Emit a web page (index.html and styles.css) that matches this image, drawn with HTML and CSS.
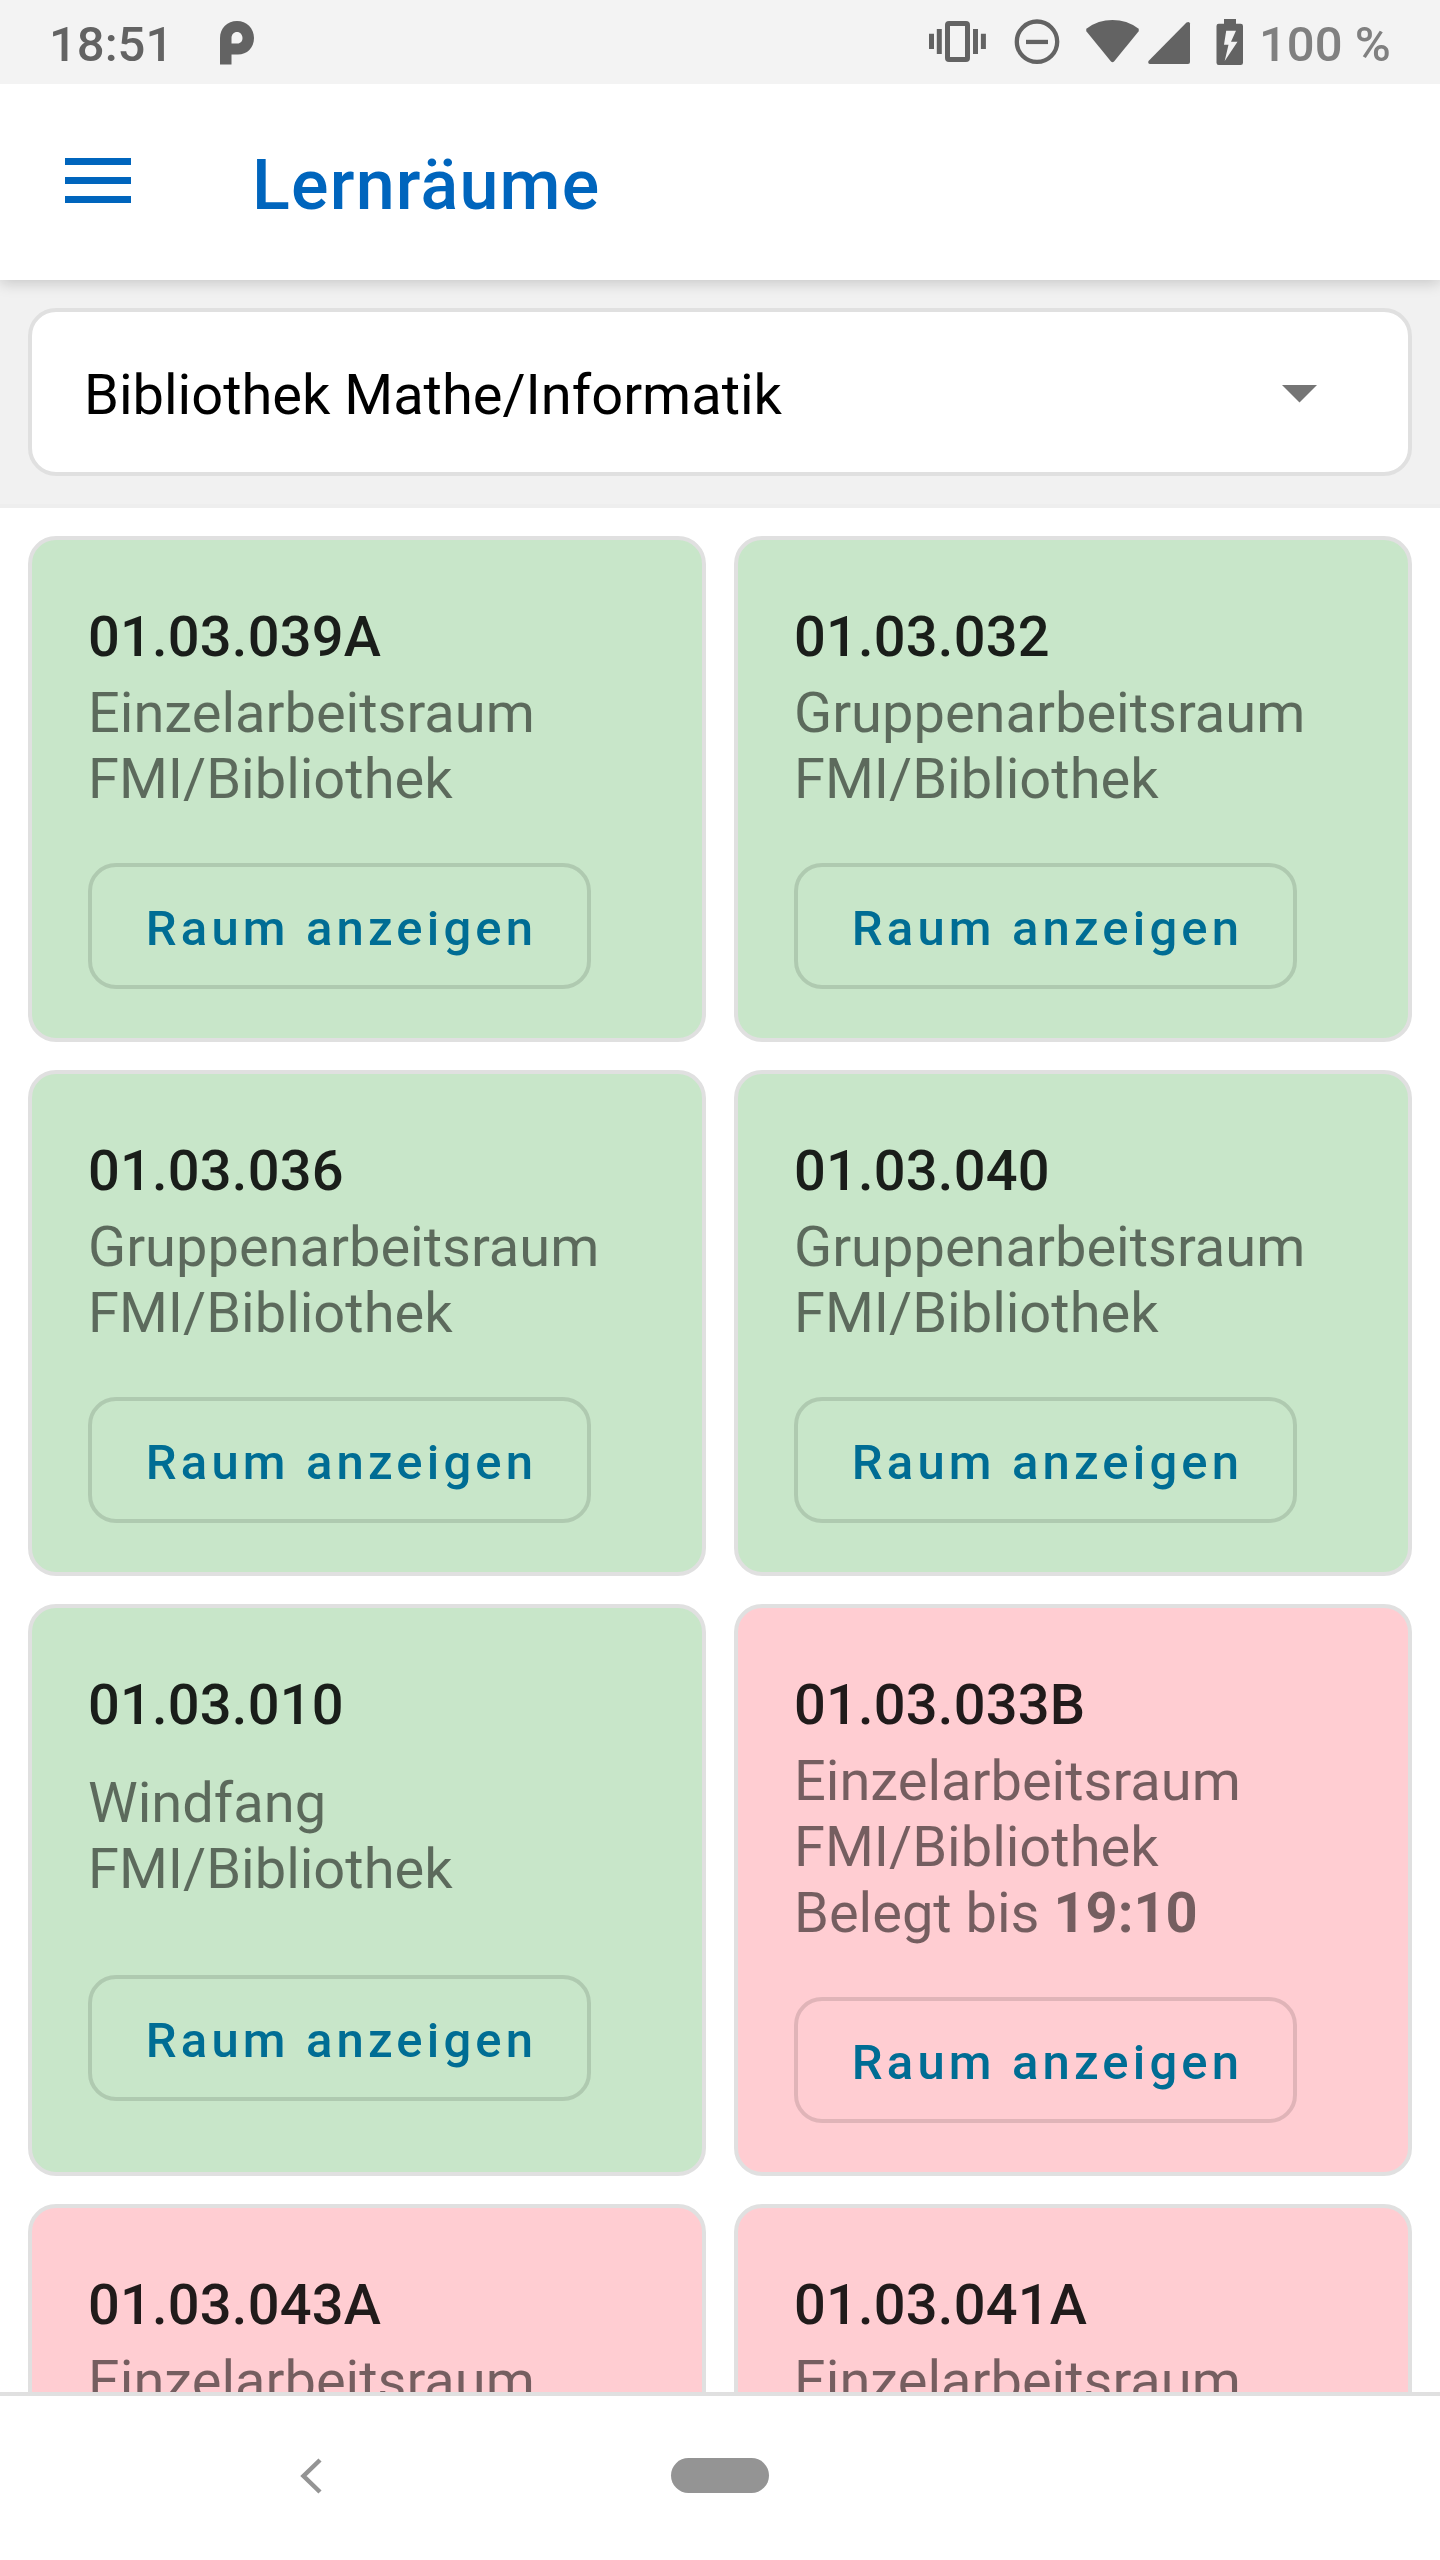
FILE: index.html
```html
<!DOCTYPE html>
<html lang="de">
<head>
<meta charset="utf-8">
<title>Lernräume</title>
<link rel="stylesheet" href="styles.css">
</head>
<body>
<div class="screen">
  <header class="status">
    <span class="clock">18:51</span>
    <svg class="p-icon" width="34" height="44" viewBox="0 0 34 44"><path fill="#636363" fill-rule="evenodd" d="M0 43.500V17C0 7 7.500 0 17 0s17 7 17 17-7 16.500-16 16.500h-6.500v10zM11.500 22.500h6c3 0 5-2.300 5-5.500 0-3.300-2.300-6-5.500-6s-5.500 2.600-5.500 6z"/></svg>
    <svg class="status-icons" width="344" height="84" viewBox="0 0 344 84" fill="#636363">
      <path d="M29 33.700h5V49h-5zM36.800 29h5v25h-5zM73 29h5v25h-5zM80.900 33.700h5V49h-5z"/>
      <rect x="47.500" y="23.500" width="20" height="36" rx="1.500" fill="none" stroke="#636363" stroke-width="5"/>
      <circle cx="137" cy="41.700" r="20.200" fill="none" stroke="#636363" stroke-width="4.300"/>
      <path d="M126 39.800h22v4.300h-22z"/>
      <path d="M211 61.500 186.500 31.500q-1.200-1.800.6-3.200Q198 20 212.500 20t25.400 8.300q1.800 1.400.6 3.200L214 61.500q-1.500 1.400-3 0z"/>
      <path d="M248.500 61 286.500 22.600q3-1.800 3.500 1V62q0 2-2 2h-38q-2.500-.5-1.500-3z"/>
      <path fill-rule="evenodd" d="M324 19h12v4.700h4.700q2.300 0 2.300 2.300v36.700q0 2.300-2.300 2.300h-22q-2.200 0-2.200-2.300V26q0-2.300 2.200-2.300h5.300zM326.200 30.700 324 44.700h4.500L324.700 61l12.800-19.300H331l5-11z"/>
    </svg>
    <span class="battery">100 %</span>
  </header>

  <nav class="toolbar">
    <svg class="menu" width="66" height="45" viewBox="0 0 66 45" fill="#0065bd"><path d="M0 0h66v7H0zM0 19h66v7H0zM0 38h66v7H0z"/></svg>
    <h1 class="heading">Lernräume</h1>
  </nav>

  <section class="filter">
    <div class="select">
      <span>Bibliothek Mathe/Informatik</span>
      <svg width="35" height="18" viewBox="0 0 35 18"><path fill="#757575" d="M0 0h35L17.500 17.500z"/></svg>
    </div>
  </section>

  <main class="rooms">
    <article class="card free">
      <h2 class="name">01.03.039A</h2>
      <p class="info">Einzelarbeitsraum<br>FMI/Bibliothek</p>
      <button class="show">Raum anzeigen</button>
    </article>
    <article class="card free">
      <h2 class="name">01.03.032</h2>
      <p class="info">Gruppenarbeitsraum<br>FMI/Bibliothek</p>
      <button class="show">Raum anzeigen</button>
    </article>
    <article class="card free">
      <h2 class="name">01.03.036</h2>
      <p class="info">Gruppenarbeitsraum<br>FMI/Bibliothek</p>
      <button class="show">Raum anzeigen</button>
    </article>
    <article class="card free">
      <h2 class="name">01.03.040</h2>
      <p class="info">Gruppenarbeitsraum<br>FMI/Bibliothek</p>
      <button class="show">Raum anzeigen</button>
    </article>
    <article class="card free">
      <h2 class="name">01.03.010</h2>
      <p class="info">Windfang<br>FMI/Bibliothek</p>
      <button class="show">Raum anzeigen</button>
    </article>
    <article class="card busy">
      <h2 class="name">01.03.033B</h2>
      <p class="info">Einzelarbeitsraum<br>FMI/Bibliothek<br>Belegt bis <b>19:10</b></p>
      <button class="show">Raum anzeigen</button>
    </article>
    <article class="card busy">
      <h2 class="name">01.03.043A</h2>
      <p class="info">Einzelarbeitsraum</p>
    </article>
    <article class="card busy">
      <h2 class="name">01.03.041A</h2>
      <p class="info">Einzelarbeitsraum</p>
    </article>
  </main>

  <footer class="navbar">
    <svg class="back" width="22" height="36" viewBox="0 0 22 36"><path fill="none" stroke="#949494" stroke-width="4.500" d="M20 2 3.500 18 20 34"/></svg>
    <span class="home"></span>
  </footer>
</div>
</body>
</html>
```
FILE: styles.css
```css
* { box-sizing: border-box; margin: 0; padding: 0; }

body {
  font-family: Roboto, sans-serif;
  background: #fff;
}

.screen {
  width: 1440px;
  height: 2560px;
  display: flex;
  flex-direction: column;
  overflow: hidden;
}

.status {
  flex: none;
  height: 84px;
  background: #f3f3f3;
  display: flex;
  align-items: flex-start;
  padding-left: 49px;
  font-size: 49px;
  line-height: 58px;
  font-weight: 500;
  color: #636363;
  z-index: 2;
}
.clock { width: 171px; padding-top: 16px; }
.p-icon { margin-top: 21px; }
.status-icons { margin-left: 646px; }
.battery { margin-left: 15px; padding-top: 16px; color: #808080; white-space: nowrap; }

.toolbar {
  flex: none;
  height: 196px;
  display: flex;
  align-items: flex-start;
  padding-left: 65px;
  background: #fff;
  box-shadow: 0 3px 14px rgba(0, 0, 0, 0.18);
  z-index: 1;
}
.menu { margin-top: 74px; }
.heading {
  margin: 60px 0 0 121px;
  font-size: 70px;
  line-height: 82px;
  font-weight: 500;
  letter-spacing: 1.2px;
  color: #0065bd;
}

.filter {
  flex: none;
  height: 228px;
  padding: 28px;
  background: #f1f1f1;
  border-bottom: 4px solid #eee;
}
.select {
  height: 168px;
  display: flex;
  align-items: center;
  justify-content: space-between;
  padding: 6px 91px 0 52px;
  background: #fff;
  border: 4px solid #e0e0e0;
  border-radius: 28px;
  font-size: 56px;
  line-height: 66px;
  color: #000;
}
.select svg { margin-bottom: 3px; }

.rooms {
  flex: 1;
  min-height: 0;
  overflow: hidden;
  display: grid;
  grid-template-columns: 1fr 1fr;
  grid-template-rows: 506px 506px 572px 572px;
  gap: 28px;
  padding: 28px;
}
.card {
  display: flex;
  flex-direction: column;
  align-items: flex-start;
  padding: 64px 24px 49px 56px;
  border: 4px solid #e0e0e0;
  border-radius: 28px;
  font-size: 56px;
  line-height: 66px;
}
.free { background: #c8e6c9; }
.busy { background: #ffcdd2; }
.name {
  font-size: 56px;
  font-weight: 500;
  letter-spacing: 0.2px;
  color: rgba(0, 0, 0, 0.87);
}
.info {
  margin: auto 0;
  padding: 10px 0 51px;
  color: rgba(0, 0, 0, 0.54);
}
.busy:nth-child(n+7) .info { margin-top: 0; }
.show {
  width: 503px;
  height: 126px;
  margin-bottom: auto;
  padding: 6px 0 0 4px;
  background: transparent;
  border: 4px solid rgba(0, 0, 0, 0.12);
  border-radius: 28px;
  font: 500 49px/58px Roboto, sans-serif;
  letter-spacing: 4.15px;
  color: #006d94;
}

.navbar {
  flex: none;
  height: 168px;
  display: flex;
  align-items: flex-start;
  padding: 62px 0 0 300px;
  background: #fff;
  border-top: 4px solid #e0e0e0;
}
.home {
  width: 98px;
  height: 35px;
  margin-left: 349px;
  border-radius: 18px;
  background: #949494;
}
```
